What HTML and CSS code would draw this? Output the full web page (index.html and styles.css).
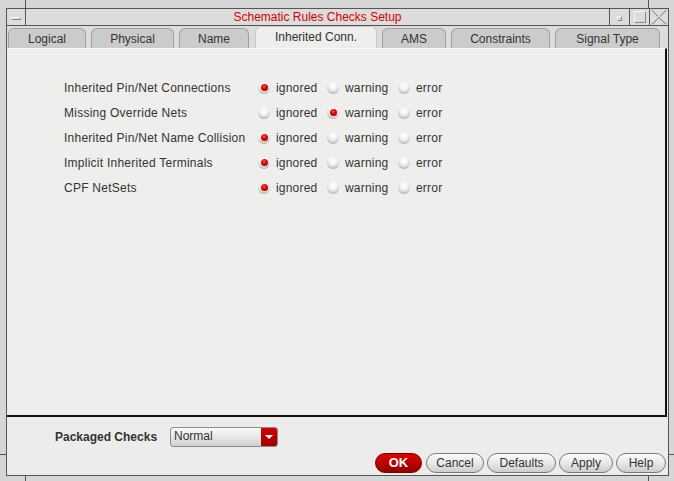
FILE: index.html
```html
<!DOCTYPE html>
<html>
<head>
<meta charset="utf-8">
<link rel="stylesheet" href="styles.css">
</head>
<body>
<div class="window">
  <span class="mark mark-tl"></span>
  <span class="mark mark-tr"></span>
  <span class="mark mark-bl"></span>
  <span class="mark mark-br"></span>
  <span class="mark mark-lb"></span>
  <span class="mark mark-rb"></span>
  <div class="titlebar">
    <div class="tbtn menu"><span class="menu-bar"></span></div>
    <div class="title">Schematic Rules Checks Setup</div>
    <div class="tbtn min"><span class="min-box"></span></div>
    <div class="tbtn max"><span class="max-box"></span></div>
    <div class="tbtn close">
      <svg width="16" height="16" viewBox="0 0 16 16"><path d="M1 1 L15 15 M15 1 L1 15" stroke="#8a8a8a" stroke-width="1.2" fill="none"/><path d="M2 1 L15 14 M14 1 L1 14" stroke="#f4f4f4" stroke-width="0.8" fill="none"/></svg>
    </div>
  </div>
  <div class="client">
    <div class="tabs">
      <div class="tab t-logical">Logical</div>
      <div class="tab t-physical">Physical</div>
      <div class="tab t-name">Name</div>
      <div class="tab t-inherited active">Inherited Conn.</div>
      <div class="tab t-ams">AMS</div>
      <div class="tab t-constraints">Constraints</div>
      <div class="tab t-signal">Signal Type</div>
    </div>
    <div class="panel">
      <div class="rows">
        <div class="row">
          <div class="label">Inherited Pin/Net Connections</div>
          <div class="opt o1"><span class="radio on"></span>ignored</div>
          <div class="opt o2"><span class="radio"></span>warning</div>
          <div class="opt o3"><span class="radio"></span>error</div>
        </div>
        <div class="row">
          <div class="label">Missing Override Nets</div>
          <div class="opt o1"><span class="radio"></span>ignored</div>
          <div class="opt o2"><span class="radio on"></span>warning</div>
          <div class="opt o3"><span class="radio"></span>error</div>
        </div>
        <div class="row">
          <div class="label">Inherited Pin/Net Name Collision</div>
          <div class="opt o1"><span class="radio on"></span>ignored</div>
          <div class="opt o2"><span class="radio"></span>warning</div>
          <div class="opt o3"><span class="radio"></span>error</div>
        </div>
        <div class="row">
          <div class="label">Implicit Inherited Terminals</div>
          <div class="opt o1"><span class="radio on"></span>ignored</div>
          <div class="opt o2"><span class="radio"></span>warning</div>
          <div class="opt o3"><span class="radio"></span>error</div>
        </div>
        <div class="row">
          <div class="label">CPF NetSets</div>
          <div class="opt o1"><span class="radio on"></span>ignored</div>
          <div class="opt o2"><span class="radio"></span>warning</div>
          <div class="opt o3"><span class="radio"></span>error</div>
        </div>
      </div>
    </div>
    <div class="bottom">
      <div class="packaged">
        <span class="pk-label">Packaged Checks</span>
        <div class="combo"><span class="combo-text">Normal</span><span class="combo-arrow"></span></div>
      </div>
      <div class="buttons">
        <div class="btn ok">OK</div>
        <div class="btn b-cancel">Cancel</div>
        <div class="btn b-defaults">Defaults</div>
        <div class="btn b-apply">Apply</div>
        <div class="btn b-help">Help</div>
      </div>
    </div>
  </div>
</div>
</body>
</html>
```

FILE: styles.css
```css
* { box-sizing: border-box; }
html, body { margin: 0; padding: 0; }
body {
  width: 674px;
  height: 481px;
  overflow: hidden;
  background: #d6d6d6;
  font-family: "Liberation Sans", Arial, sans-serif;
  font-size: 12px;
  color: #333;
}
.window {
  position: relative;
  width: 674px;
  height: 481px;
  background: #d6d6d6;
  padding: 8px 5px 5px 6px;
  display: flex;
  flex-direction: column;
}
.mark { position: absolute; background: #555; }
.mark-tl { left: 25px; top: 0; width: 1px; height: 8px; }
.mark-tr { left: 648px; top: 0; width: 1px; height: 8px; }
.mark-bl { left: 25px; top: 476px; width: 1px; height: 5px; }
.mark-br { left: 648px; top: 476px; width: 1px; height: 5px; }
.mark-lb { left: 0; top: 454px; width: 6px; height: 1px; }
.mark-rb { left: 669px; top: 454px; width: 5px; height: 1px; }

.titlebar {
  height: 18px;
  display: flex;
  border: 1px solid #555;
  background: #dcdcdc;
}
.tbtn {
  display: flex;
  align-items: center;
  justify-content: center;
}
.menu { width: 19px; border-right: 1px solid #555; }
.menu-bar {
  width: 10px; height: 3px;
  border: 1px solid #8a8a8a;
  border-top-color: #f6f6f6; border-left-color: #f6f6f6;
  margin-top: 3px;
}
.title {
  flex: 1;
  text-align: center;
  color: #d40000;
  font-size: 12px;
  line-height: 16px;
}
.min { width: 20px; border-left: 1px solid #555; }
.min-box {
  width: 5px; height: 5px;
  border: 1px solid #8a8a8a;
  border-top-color: #f6f6f6; border-left-color: #f6f6f6;
  margin-top: 2px;
}
.max { width: 20px; border-left: 1px solid #555; }
.max-box {
  width: 12px; height: 12px;
  border: 1px solid #8a8a8a;
  border-top-color: #f6f6f6; border-left-color: #f6f6f6;
}
.close { width: 19px; border-left: 1px solid #555; }

.client {
  flex: 1;
  display: flex;
  flex-direction: column;
  border-left: 1px solid #555;
  border-right: 1px solid #555;
  border-bottom: 1px solid #555;
  background: #ececea;
}
.tabs {
  height: 22px;
  display: flex;
  align-items: flex-end;
  background: #dcdcdc;
  padding-left: 1px;
}
.tab {
  height: 20px;
  margin-right: 5px;
  background: #cbcbcb;
  border: 1px solid #a0a0a0;
  border-bottom: none;
  border-radius: 6px 6px 0 0;
  text-align: center;
  line-height: 21px;
  color: #333;
  font-size: 12px;
}
.tab.active {
  height: 22px;
  background: #ededeb;
  border-color: #c8c8c8;
  line-height: 21px;
}
.t-logical { width: 78px; }
.t-physical { width: 83px; }
.t-name { width: 70px; margin-right: 6px; }
.t-inherited { width: 122px; }
.t-ams { width: 64px; }
.t-constraints { width: 99px; }
.t-signal { width: 105px; margin-right: 0; }

.panel {
  height: 369px;
  margin-right: 1px;
  background: #eeeeec;
  border-top: 1px solid #f8f8f8;
  border-right: 2px solid #111;
  border-bottom: 2px solid #111;
  padding: 26px 0 0 57px;
}
.rows { display: flex; flex-direction: column; }
.row {
  height: 25px;
  display: flex;
  align-items: center;
}
.label { width: 195px; letter-spacing: 0.25px; }
.opt { display: flex; align-items: center; letter-spacing: 0.2px; }
.o1 { width: 69px; }
.o2 { width: 71px; }
.radio {
  width: 12px; height: 12px;
  border-radius: 50%;
  margin-right: 6px;
  margin-left: -1px;
  background: radial-gradient(circle at 50% 30%, #ffffff 0%, #f2f2f2 40%, #c8c8c8 70%, #7f7f7f 100%);
  position: relative;
}
.radio.on::after {
  content: "";
  position: absolute;
  left: 3px; top: 2px;
  width: 7px; height: 7px;
  border-radius: 50%;
  background: radial-gradient(circle at 45% 35%, #ff5050 0%, #d80000 45%, #8a0000 100%);
}

.bottom {
  flex: 1;
  display: flex;
  flex-direction: column;
  padding: 10px 2px 0 0;
}
.packaged {
  display: flex;
  align-items: center;
  height: 20px;
  padding-left: 48px;
}
.pk-label {
  font-weight: bold;
  font-size: 12px;
  width: 115px;
  color: #333;
}
.combo {
  width: 108px; height: 20px;
  display: flex;
  border: 1px solid #8c8c8c;
  border-radius: 3px;
  background: linear-gradient(#fafafa, #e4e4e4 60%, #cfcfcf);
  overflow: hidden;
}
.combo-text { flex: 1; padding-left: 3px; line-height: 17px; color: #333; }
.combo-arrow {
  width: 16px;
  background: linear-gradient(#d00000, #a50000);
  display: flex; align-items: center; justify-content: center;
}
.combo-arrow::after {
  content: "";
  border-left: 4px solid transparent;
  border-right: 4px solid transparent;
  border-top: 4px solid #fff;
}
.buttons {
  display: flex;
  justify-content: flex-end;
  gap: 3px;
  margin-top: 6px;
}
.btn {
  height: 20px;
  border: 1px solid #7a7a7a;
  border-radius: 10px;
  background: linear-gradient(#fbfbfb, #e6e6e6 55%, #cdcdcd);
  text-align: center;
  line-height: 18px;
  color: #333;
  font-size: 12px;
}
.ok {
  width: 47px;
  background: linear-gradient(#e00000, #b40000 60%, #900000);
  border-color: #7a0000;
  color: #fff;
  font-weight: bold;
  font-size: 13px;
  margin-right: 1px;
}
.b-cancel { width: 58px; }
.b-defaults { width: 69px; }
.b-apply { width: 54px; }
.b-help { width: 50px; }
```
